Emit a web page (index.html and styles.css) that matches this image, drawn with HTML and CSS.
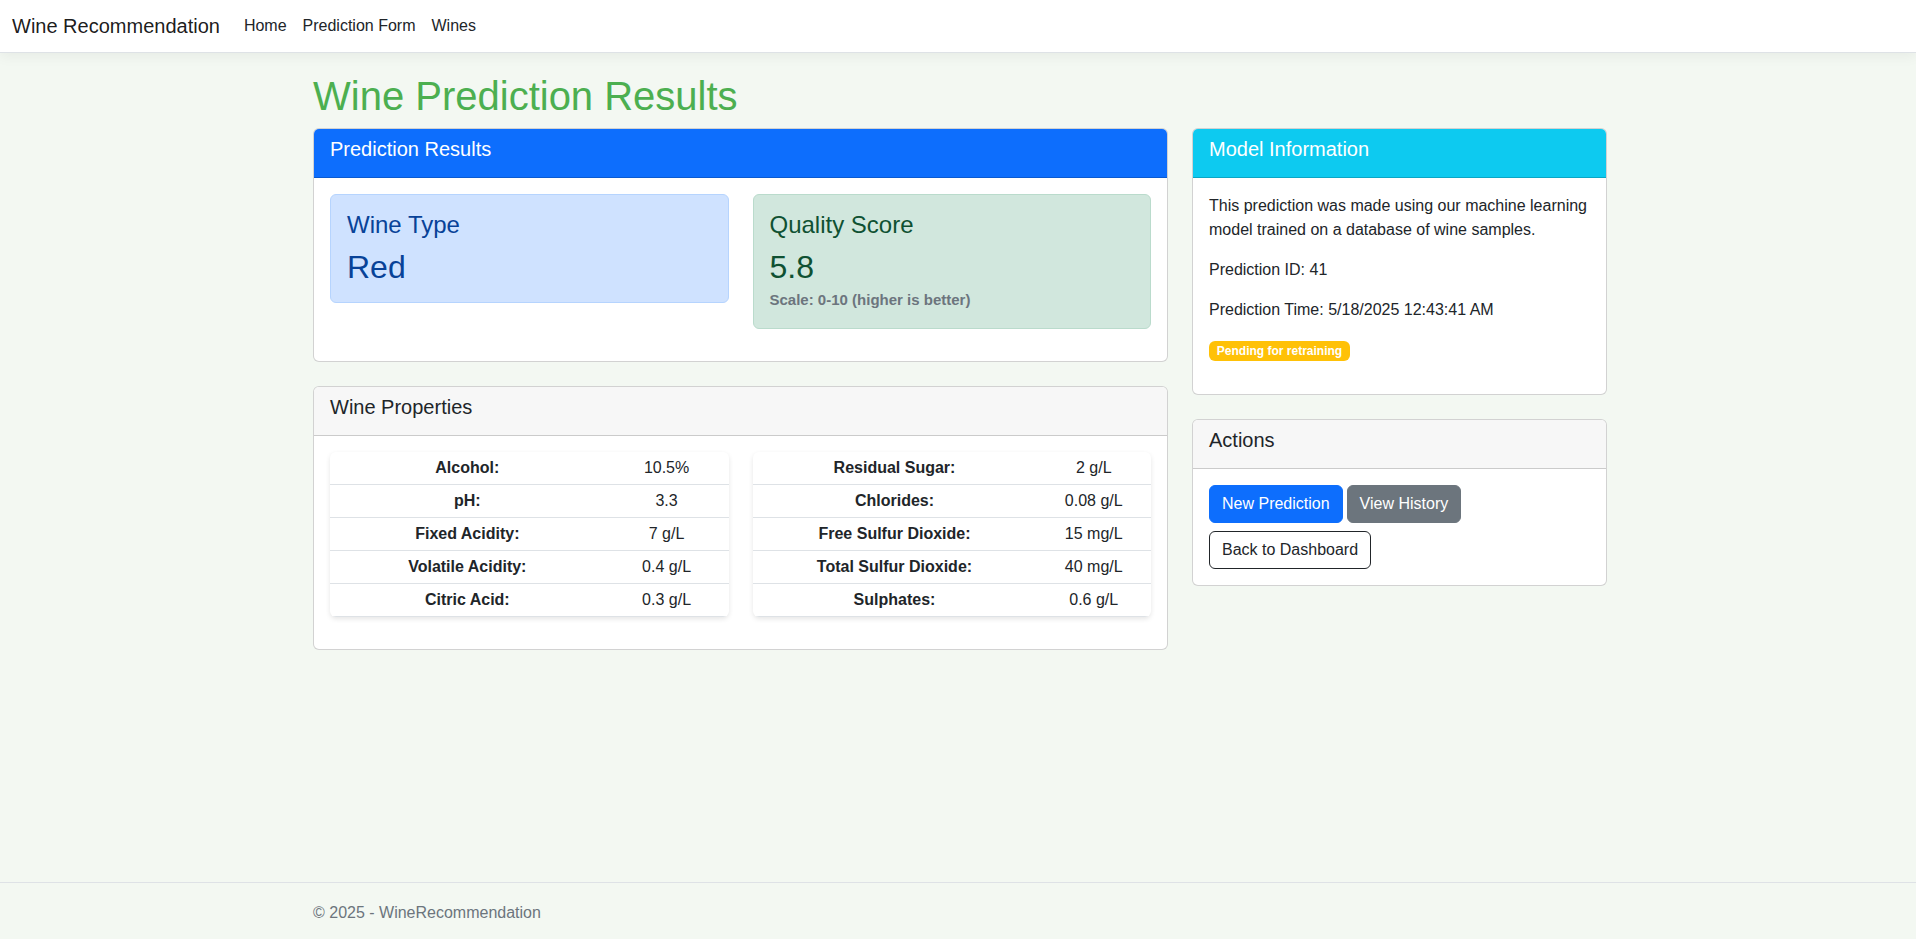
FILE: index.html
```html
<!DOCTYPE html>
<html lang="en">
<head>
<meta charset="utf-8">
<title>Wine Prediction Results - WineRecommendation</title>
<link rel="stylesheet" href="styles.css">
</head>
<body>
<header class="navbar">
  <a class="brand" href="#">Wine Recommendation</a>
  <nav class="nav">
    <a class="nav-link" href="#">Home</a>
    <a class="nav-link" href="#">Prediction Form</a>
    <a class="nav-link" href="#">Wines</a>
  </nav>
</header>

<main class="main">
  <div class="container">
    <h1 class="page-title">Wine Prediction Results</h1>
    <div class="layout">
      <div class="stack">
        <section class="card">
          <div class="card-header primary"><h5>Prediction Results</h5></div>
          <div class="card-body">
            <div class="two-col">
              <div class="alert alert-primary">
                <h4>Wine Type</h4>
                <h2 class="value">Red</h2>
              </div>
              <div class="alert alert-success">
                <h4>Quality Score</h4>
                <h2 class="value">5.8</h2>
                <p class="scale"><small>Scale: 0-10 (higher is better)</small></p>
              </div>
            </div>
          </div>
        </section>

        <section class="card">
          <div class="card-header"><h5>Wine Properties</h5></div>
          <div class="card-body">
            <div class="two-col">
              <table class="props">
                <tbody>
                  <tr><th>Alcohol:</th><td>10.5%</td></tr>
                  <tr><th>pH:</th><td>3.3</td></tr>
                  <tr><th>Fixed Acidity:</th><td>7 g/L</td></tr>
                  <tr><th>Volatile Acidity:</th><td>0.4 g/L</td></tr>
                  <tr><th>Citric Acid:</th><td>0.3 g/L</td></tr>
                </tbody>
              </table>
              <table class="props">
                <tbody>
                  <tr><th>Residual Sugar:</th><td>2 g/L</td></tr>
                  <tr><th>Chlorides:</th><td>0.08 g/L</td></tr>
                  <tr><th>Free Sulfur Dioxide:</th><td>15 mg/L</td></tr>
                  <tr><th>Total Sulfur Dioxide:</th><td>40 mg/L</td></tr>
                  <tr><th>Sulphates:</th><td>0.6 g/L</td></tr>
                </tbody>
              </table>
            </div>
          </div>
        </section>
      </div>

      <div class="stack">
        <section class="card">
          <div class="card-header info"><h5>Model Information</h5></div>
          <div class="card-body">
            <p>This prediction was made using our machine learning model trained on a database of wine samples.</p>
            <p>Prediction ID: 41</p>
            <p>Prediction Time: 5/18/2025 12:43:41 AM</p>
            <p><span class="badge">Pending for retraining</span></p>
          </div>
        </section>

        <section class="card">
          <div class="card-header"><h5>Actions</h5></div>
          <div class="card-body">
            <div class="btn-row">
              <a class="btn btn-primary" href="#">New Prediction</a>
              <a class="btn btn-secondary" href="#">View History</a>
              <a class="btn btn-outline-dark" href="#">Back to Dashboard</a>
            </div>
          </div>
        </section>
      </div>
    </div>
  </div>
</main>

<footer class="footer">
  <div class="container">&copy; 2025 - WineRecommendation</div>
</footer>
</body>
</html>
```
FILE: styles.css
```css
* {
  box-sizing: border-box;
}

html,
body {
  margin: 0;
}

body {
  font-family: "Liberation Sans", Arial, Helvetica, sans-serif;
  font-size: 16px;
  line-height: 1.5;
  color: #212529;
  background: #f3f8f2;
  min-height: 100vh;
  display: flex;
  flex-direction: column;
}

/* Navbar */
.navbar {
  height: 53px;
  flex: none;
  background: #fff;
  border-bottom: 1px solid #dee2e6;
  box-shadow: 0 0.25rem 0.75rem rgba(0, 0, 0, 0.05);
  display: flex;
  align-items: center;
  padding: 0 12px;
  position: relative;
  z-index: 1;
}

.brand {
  font-size: 20px;
  line-height: 30px;
  color: rgba(0, 0, 0, 0.9);
  text-decoration: none;
  margin-right: 16px;
  white-space: nowrap;
}

.nav {
  display: flex;
}

.nav-link {
  padding: 8px;
  line-height: 24px;
  color: #212529;
  text-decoration: none;
  white-space: nowrap;
}

/* Main */
.main {
  flex: 1;
  padding-top: 19px;
}

.container {
  width: 1294px;
  margin-left: calc(50% - 645px);
}

.page-title {
  font-size: 40px;
  line-height: 48px;
  font-weight: 500;
  color: #4caf50;
  margin: 0 0 8px;
}

.layout {
  display: grid;
  grid-template-columns: 855px 415px;
  column-gap: 24px;
  align-items: start;
}

.stack {
  display: flex;
  flex-direction: column;
  gap: 24px;
}

/* Cards */
.card {
  background: #fff;
  border: 1px solid rgba(0, 0, 0, 0.175);
  border-radius: 6px;
}

.card-header {
  padding: 8px 16px;
  background: #f7f7f7;
  border-bottom: 1px solid rgba(0, 0, 0, 0.175);
  border-radius: 5px 5px 0 0;
}

.card-header h5 {
  margin: 0 0 8px;
  font-size: 20px;
  line-height: 24px;
  font-weight: 500;
}

.card-header.primary {
  background: #0d6efd;
  color: #fff;
}

.card-header.info {
  background: #0dcaf0;
  color: #fff;
}

.card-body {
  padding: 16px;
}

.card-body p {
  margin: 0 0 16px;
}

.two-col {
  display: grid;
  grid-template-columns: 1fr 1fr;
  column-gap: 24px;
  align-items: start;
}

/* Alerts */
.alert {
  padding: 16px;
  border: 1px solid transparent;
  border-radius: 6px;
  margin-bottom: 16px;
}

.alert-primary {
  color: #084298;
  background: #cfe2ff;
  border-color: #b6d4fe;
}

.alert-success {
  color: #0f5132;
  background: #d1e7dd;
  border-color: #badbcc;
}

.alert h4 {
  font-size: 24px;
  line-height: 28.8px;
  font-weight: 500;
  margin: 0 0 8px;
}

.alert .value {
  font-size: 32px;
  line-height: 38px;
  font-weight: 500;
  margin: 0;
}

.card-body .scale {
  margin: 2px 0 0;
}

.scale small {
  font-size: 15px;
  font-weight: 700;
  color: #6c757d;
}

/* Property tables */
.props {
  width: 100%;
  border-collapse: separate;
  border-spacing: 0;
  background: #fff;
  border-radius: 6px;
  box-shadow: 0 0.125rem 0.3rem rgba(0, 0, 0, 0.1);
  margin-bottom: 16px;
  text-align: center;
  overflow: hidden;
}

.props th,
.props td {
  padding: 4px;
  line-height: 24px;
  border-bottom: 1px solid #dee2e6;
  color: #212529;
}

.props th {
  font-weight: 700;
}

/* Badge */
.badge {
  display: inline-block;
  padding: 0.35em 0.65em;
  font-size: 12px;
  font-weight: 700;
  line-height: 1;
  color: #fff;
  background: #ffc107;
  border-radius: 6px;
  white-space: nowrap;
  vertical-align: baseline;
}

/* Buttons */
.btn-row {
  display: flex;
  flex-wrap: wrap;
  gap: 8px 4px;
}

.btn {
  display: inline-block;
  padding: 6px 12px;
  font-size: 16px;
  line-height: 24px;
  border: 1px solid transparent;
  border-radius: 6px;
  text-decoration: none;
  white-space: nowrap;
}

.btn-primary {
  color: #fff;
  background: #0d6efd;
  border-color: #0d6efd;
}

.btn-secondary {
  color: #fff;
  background: #6c757d;
  border-color: #6c757d;
}

.btn-outline-dark {
  color: #212529;
  background: transparent;
  border-color: #212529;
}

/* Footer */
.footer {
  flex: none;
  border-top: 1px solid #dee2e6;
  color: #6c757d;
  padding-top: 3px;
  line-height: 53px;
  white-space: nowrap;
}
```
